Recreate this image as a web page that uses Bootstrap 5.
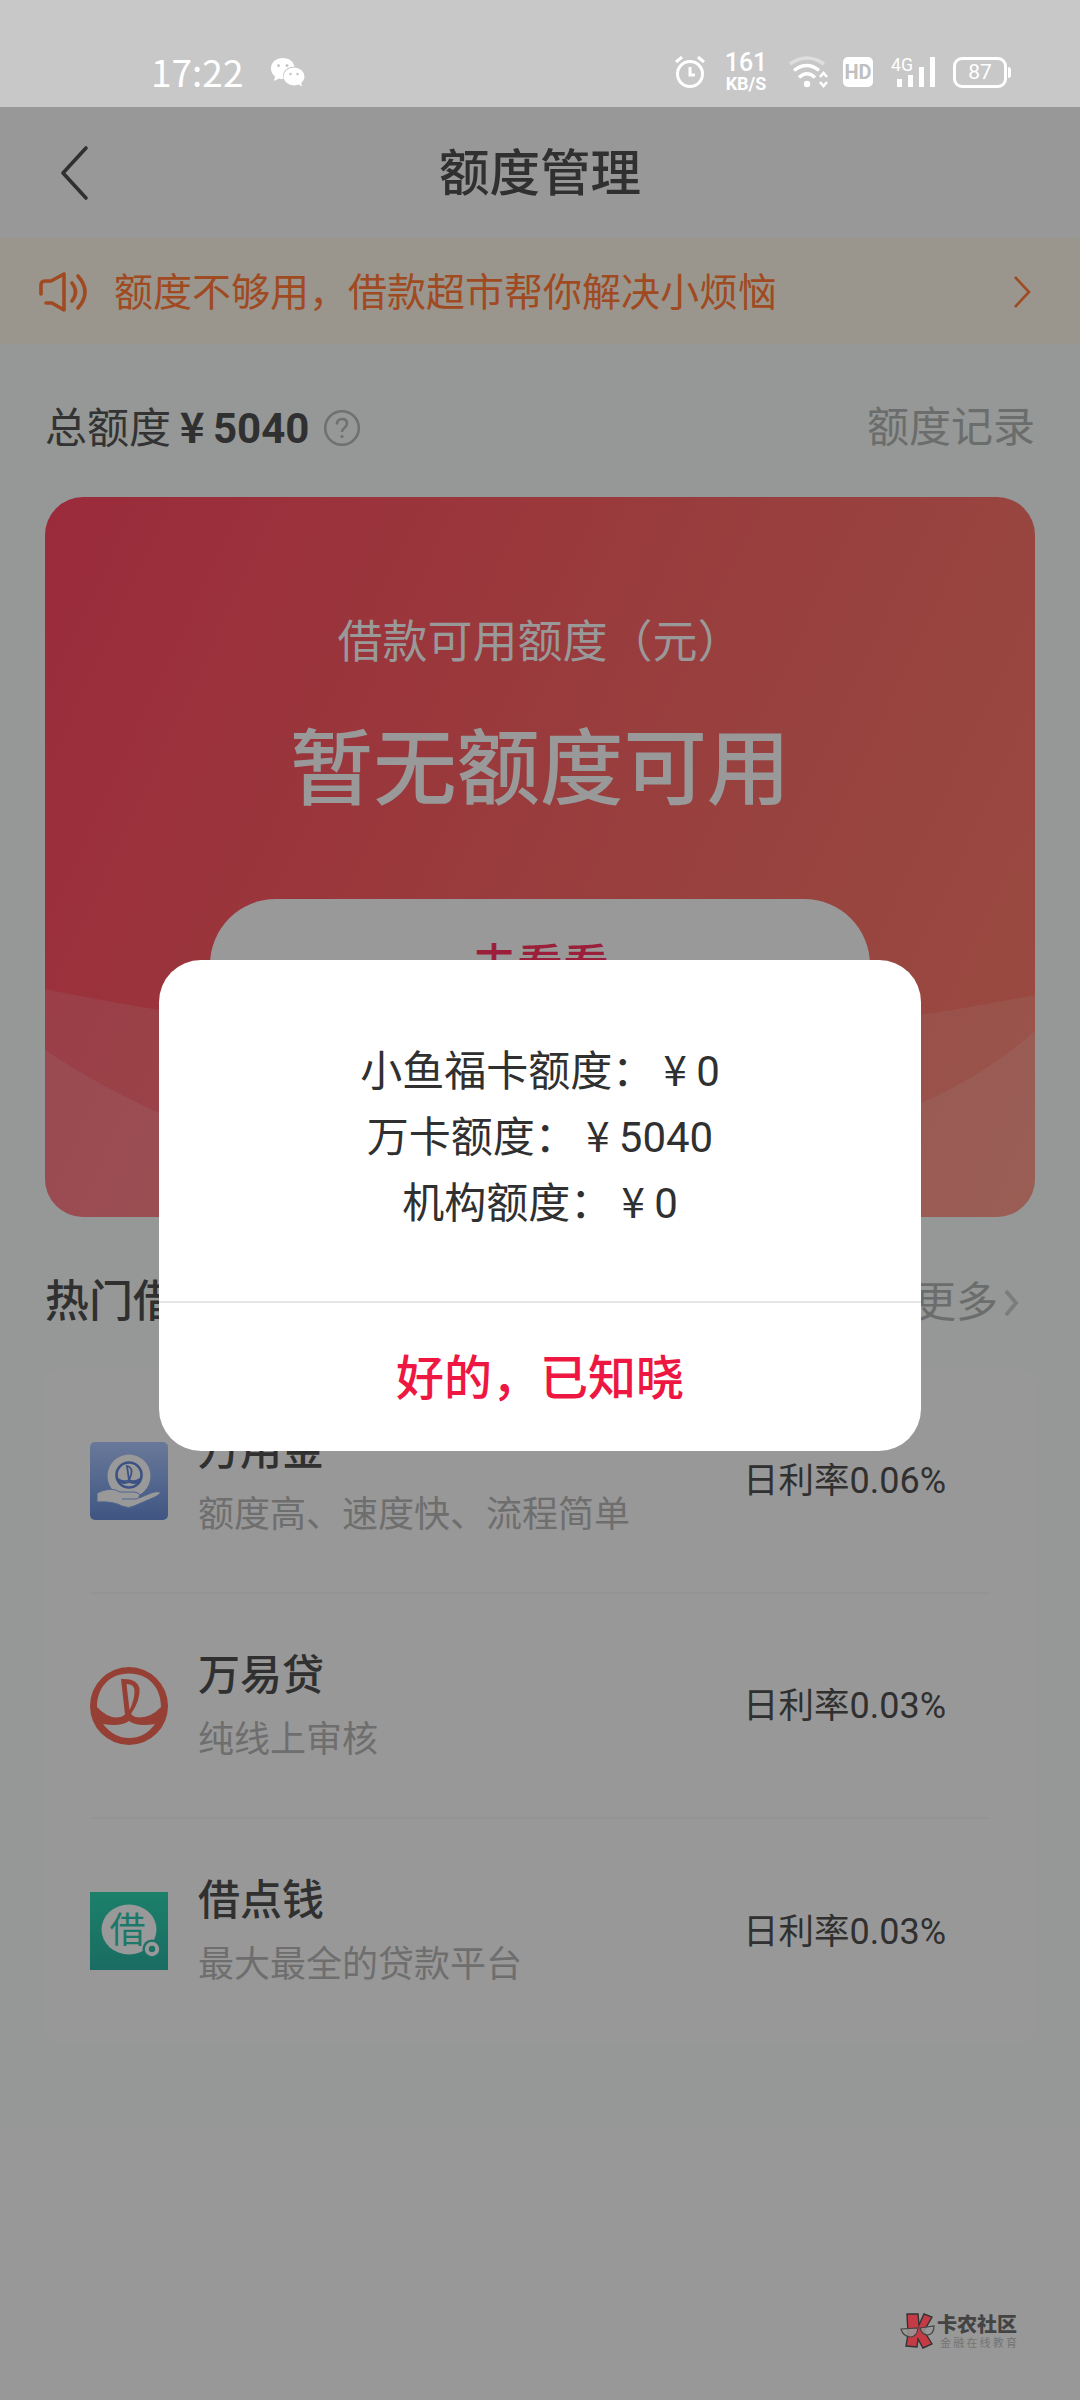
<!DOCTYPE html>
<html lang="zh-CN">
<head>
<meta charset="utf-8">
<meta name="viewport" content="width=device-width, initial-scale=1">
<title>额度管理</title>
<link rel="stylesheet" href="https://cdn.jsdelivr.net/npm/bootstrap@5.3.0/dist/css/bootstrap.min.css">
<style>
body{font-family:Roboto,"Noto Sans CJK SC",sans-serif;background:#989898;color:#333;width:1080px;height:2400px;overflow:hidden}
svg{display:block;flex:none}
.screen{width:1080px;height:2400px}
.statusbar{height:107px;background:#c8c8c8;color:#fff;padding:38px 69px 0 151px}
.clock{font-size:37px;line-height:66px;font-family:"Noto Sans CJK SC",sans-serif;font-weight:400;width:95px}
.chat{margin:19px auto 0 25px}
.icons{height:68px}
.speed{width:44px;margin:-2px 21px 0 19px;font-weight:700;text-align:center}
.speed b{font-size:25px;line-height:24px;font-weight:500}
.speed span{font-size:18px;line-height:17px;letter-spacing:0}
.hd{width:30px;height:30px;border-radius:5px;background:#fff;color:#c0c0c0;font:700 20px/31px Roboto,sans-serif;text-align:center;margin:0 18px 0 15px}
.cell{overflow:visible}
.batt{width:54px;height:31px;border:3px solid #fff;border-radius:9px;font-size:21px;font-weight:400;line-height:25px;text-align:center;margin-left:17px}
.nub{width:3px;height:11px;border-radius:0 3px 3px 0;background:#fff;margin-left:1px}
.titlebar{height:131px;padding:0 60px}
.titlebar h1{font-size:50.5px;line-height:76px;font-weight:500;margin:0;padding-top:3px;color:#303030}
.side{width:60px}
.notice{height:106px;background:#9a968e;color:#a04a22;padding:2px 49px 0 38px}
.notice p{font-size:39px;margin-left:26px;padding-top:3px}
.pane{background:#959896;padding:0 45px 86px}
.summary{height:153px;padding-top:51px;font-size:42px;line-height:60px}
.yen{display:inline-block;width:1em;text-align:center;font-family:"Noto Sans CJK SC",sans-serif}
.summary .yen,.summary b{font-weight:700;color:#303030}
.help{margin-left:14px;margin-top:14px}
.muted{color:#6b6d6c}
.record{padding-top:3px}
.quota{height:720px;border-radius:38px;background:linear-gradient(115deg,#9b2b3b 0%,#9a383c 38%,#98423f 65%,#9a4b40 100%);color:#999;overflow:hidden}
.quota .waves{position:absolute;left:0;bottom:0}
.quota .body{position:relative;padding-top:114px}
.quota p{font-size:45px;line-height:64px;margin:0}
.quota h2{font-size:83.4px;line-height:120px;font-weight:500;margin:35px 0 0;color:#999}
.look{width:660px;height:132px;border-radius:66px;background:#999;color:#9b1f3b;font-size:46px;font-weight:500;margin-top:69px;padding:3px 0 0;border:0}
.hot{height:152px;padding:19px 15px 0 0;font-size:42px}
.hot h3{font-size:44px;font-weight:500;margin:0;color:#303030}
.offers{background:#989898;border-radius:14px;height:674px;padding:0 45px}
.offer{height:225px;border-bottom:2px solid #939494}
.offer:last-child{border:0;height:224px}
.offer h4{font-size:42px;line-height:63px;font-weight:500;margin:4px 0 0;color:#303030}
.offer .desc{font-size:36px;line-height:64px;color:#6e6e6e;padding-top:1px}
.info{margin-left:30px}
.rate{font-size:36px;color:#303030;padding:2px 44px 0 0}
.rate span{font-size:35.500px}
.dialogbox{position:absolute;left:159px;top:960px;width:762px;height:491px;border-radius:42px;background:#fff;color:#303030}
.lines{height:343px;font-size:42px;line-height:66px;padding-top:75px;border-bottom:2px solid #e5e5e5}
.lines>div{height:66px}
.ok{height:148px;font-size:48px;font-weight:500;color:#ee1742;background:none;border:0;width:100%;padding:3px 0 0}
.brand{position:absolute;left:900px;top:2312px;color:#444;font-family:"Noto Sans CJK SC",sans-serif}
.brand b{font-size:20px;line-height:24px;font-weight:900}
.brand span{font-size:11px;line-height:13px;letter-spacing:2.2px;color:#747474;margin-left:3px}
</style>
</head>
<body>
<div class="screen position-relative">
  <header class="statusbar d-flex align-items-start">
    <div class="clock">17:22</div>
    <svg class="chat" width="34" height="30" viewBox="0 0 34 30"><path fill="#fff" d="M12 1C5 1 0 5.500 0 11.500c0 3.200 1.600 6 4 8L3 24l5-2.500c1.500.4 3 .6 4.500.5A9.500 9.500 0 0 1 12 19c0-5.500 5-9.500 11.500-9.500C22.500 4.500 18 1 12 1z"/><ellipse cx="23" cy="19.500" rx="10.500" ry="9" fill="#fff"/><path fill="#fff" d="M27 27l4 2.500-1-4z"/><g fill="#c8c8c8"><circle cx="7.500" cy="8.500" r="1.500"/><circle cx="16" cy="8.500" r="1.500"/><circle cx="19.500" cy="17" r="1.300"/><circle cx="26.500" cy="17" r="1.300"/></g></svg>
    <div class="icons d-flex align-items-center">
      <svg width="30" height="32" viewBox="0 0 30 32" fill="none" stroke="#fff" stroke-width="3"><circle cx="15" cy="18" r="12.500"/><path d="M15 11v8h5M1 6l6-5M29 6l-6-5"/></svg>
      <div class="speed d-flex flex-column"><b>161</b><span>KB/S</span></div>
      <svg width="39" height="32" viewBox="0 0 39 32" fill="none" stroke="#fff" stroke-width="3.400"><path stroke="#dedede" d="M1 8Q18-4 35 8"/><path d="M5 14.500Q18 4.500 30 14.500M10 21.500Q18 14 26 21.500"/><circle cx="18" cy="28" r="3.200" fill="#fff" stroke="none"/><path stroke-width="2.600" d="M31 21l3.500-4 3.500 4M31 26l3.500 4 3.500-4"/></svg>
      <div class="hd">HD</div>
      <svg class="cell" width="45" height="32" viewBox="0 0 45 32"><text x="0" y="15" font-size="19" textLength="22" lengthAdjust="spacingAndGlyphs" fill="#fff" font-family="Roboto">4G</text><path fill="#fff" d="M6 23h5v8H6zM17 19h5v12h-5zM28 11h5v20h-5zM39 1h5v30h-5z"/></svg>
      <div class="batt">87</div><div class="nub"></div>
    </div>
  </header>

  <nav class="titlebar d-flex align-items-center justify-content-between">
    <div class="side"><svg width="30" height="56" viewBox="0 0 30 56" fill="none" stroke="#303030" stroke-width="3.600" stroke-linecap="round" stroke-linejoin="round"><path d="M26 3L3 28l23 25"/></svg></div>
    <h1>额度管理</h1>
    <div class="side"></div>
  </nav>

  <div class="notice d-flex align-items-center">
    <svg width="50" height="42" viewBox="0 0 50 42" fill="none" stroke="#a04a22" stroke-width="3.600" stroke-linecap="round" stroke-linejoin="round"><path d="M3 23V14q0-4 4-4h6L26 3v36l-12-7H8M34 12q7 9 0 18M40 5q14 16 0 32"/></svg>
    <p class="mb-0 me-auto">额度不够用，借款超市帮你解决小烦恼</p>
    <svg width="18" height="34" viewBox="0 0 18 34" fill="none" stroke="#a04a22" stroke-width="2.600"><path d="M2 2l14 15L2 32"/></svg>
  </div>

  <main class="pane">
    <div class="summary d-flex align-items-start">
      <div class="d-flex align-items-baseline"><span>总额度</span><span class="yen">¥</span><b>5040</b></div>
      <svg class="help me-auto" width="38" height="38" viewBox="0 0 38 38" fill="none" stroke="#6f7170" stroke-width="2.600"><circle cx="19" cy="19" r="16.800"/><path d="M14 15.500q0-5.500 5-5.500t5 4.500q0 2.500-2.700 4.500-2.300 1.500-2.300 4"/><circle cx="19" cy="27.500" r="1.600" fill="#6f7170" stroke="none"/></svg>
      <span class="muted record">额度记录</span>
    </div>

    <section class="quota position-relative">
      <svg class="waves" width="990" height="250" viewBox="0 0 990 250"><path fill="#999" fill-opacity=".13" d="M0 22Q500 125 990 28V250H0z"/><path fill="#999" fill-opacity=".13" d="M0 83Q54 119 114 146Q495 310 876 136Q940 108 990 64V250H0z"/></svg>
      <div class="body d-flex flex-column align-items-center">
        <p>借款可用额度（元）</p>
        <h2>暂无额度可用</h2>
        <button class="look">去看看</button>
      </div>
    </section>

    <div class="hot d-flex align-items-center justify-content-between">
      <h3>热门借款</h3>
      <div class="muted d-flex align-items-center">更多<svg style="margin-left:5px" width="17" height="30" viewBox="0 0 17 30" fill="none" stroke="#7b7d7c" stroke-width="3.800"><path d="M3 3l10 12L3 27"/></svg></div>
    </div>

    <section class="offers">
      <div class="offer d-flex align-items-center">
        <svg width="78" height="78" viewBox="0 0 78 78"><defs><linearGradient id="blue" x2="0" y2="1"><stop stop-color="#69799a"/><stop offset="1" stop-color="#3f5582"/></linearGradient></defs><rect width="78" height="78" rx="5" fill="url(#blue)"/><circle cx="39" cy="34" r="21.500" fill="#999"/><circle cx="39" cy="33" r="12.500" fill="none" stroke="#3c5284" stroke-width="2.600"/><path d="M37 24l2 14q6-12-2-14zM28 37q5 4 11 1 5 3 11-1-3 6-11 3-7 3-11-3z" fill="none" stroke="#3c5284" stroke-width="1.800"/><path d="M7 51q14-7 23-1h14q8 1 5 6l12-5q5-2 9-1 2 1-5 5L44 64q-5 3-12 0-9-5-25-4z" fill="#999" stroke="#50658f" stroke-width="1"/><path d="M32 57h12q6 0 5-3" fill="none" stroke="#50658f"/></svg>
        <div class="info flex-grow-1"><h4>万用金</h4><div class="desc">额度高、速度快、流程简单</div></div>
        <div class="rate"><span>日利率</span>0.06%</div>
      </div>
      <div class="offer d-flex align-items-center">
        <svg width="78" height="78" viewBox="0 0 78 78"><path fill="#963f34" fill-rule="evenodd" d="M39 0a39 39 0 1 1 0 78a39 39 0 1 1 0-78zM39 6.500C19 6.500 7 21 7 40q9 10 19 10.500 6 0 9-3L31 12q16-1 18.500 9 1 12-8.500 26 3 3.500 9 3.500 11 0 21-10.500C71 21 59 6.500 39 6.500zM36.500 17l3 26q5-10 5-19 0-7-8-7zM13 57q11 14 26 14 16 0 26-14-18 3-26-3-8 6-26 3z"/></svg>
        <div class="info flex-grow-1"><h4>万易贷</h4><div class="desc">纯线上审核</div></div>
        <div class="rate"><span>日利率</span>0.03%</div>
      </div>
      <div class="offer d-flex align-items-center">
        <svg width="78" height="78" viewBox="0 0 78 78"><defs><linearGradient id="teal" x2="0" y2="1"><stop stop-color="#1b806a"/><stop offset="1" stop-color="#1a6c62"/></linearGradient></defs><rect width="78" height="78" fill="url(#teal)"/><ellipse cx="39" cy="37.500" rx="27.500" ry="25" fill="#999"/><text x="37.500" y="51" text-anchor="middle" font-size="36" fill="#1c7868" font-family="Noto Sans CJK SC" font-weight="400">借</text><circle cx="62" cy="57" r="9.500" fill="#1c7065"/><circle cx="62" cy="57" r="5.200" fill="none" stroke="#999" stroke-width="4"/></svg>
        <div class="info flex-grow-1"><h4>借点钱</h4><div class="desc">最大最全的贷款平台</div></div>
        <div class="rate"><span>日利率</span>0.03%</div>
      </div>
    </section>
  </main>

  <div class="dialogbox text-center">
    <div class="lines">
      <div>小鱼福卡额度：<span class="yen">¥</span>0</div>
      <div>万卡额度：<span class="yen">¥</span>5040</div>
      <div>机构额度：<span class="yen">¥</span>0</div>
    </div>
    <button class="ok">好的，已知晓</button>
  </div>

  <div class="brand d-flex">
    <svg width="36" height="38" viewBox="0 0 36 38"><path fill="#c53b45" stroke="#333" stroke-width="1.400" d="M7 2h11l1 11 5-11 8 3-8 14 8 13-9 4-5-9-1 8-11-1 2-12z"/><path fill="#999" fill-opacity=".85" stroke="#444" stroke-width="1.200" d="M1 17l17-1q-1 9-8 9-7-1-9-8zM20 16l14-2q0 8-6 9-6 0-8-7z"/></svg>
    <div class="d-flex flex-column" style="margin-left:1px"><b>卡农社区</b><span>金融在线教育</span></div>
  </div>
</div>
<script src="https://cdn.jsdelivr.net/npm/bootstrap@5.3.0/dist/js/bootstrap.bundle.min.js"></script>
</body>
</html>
